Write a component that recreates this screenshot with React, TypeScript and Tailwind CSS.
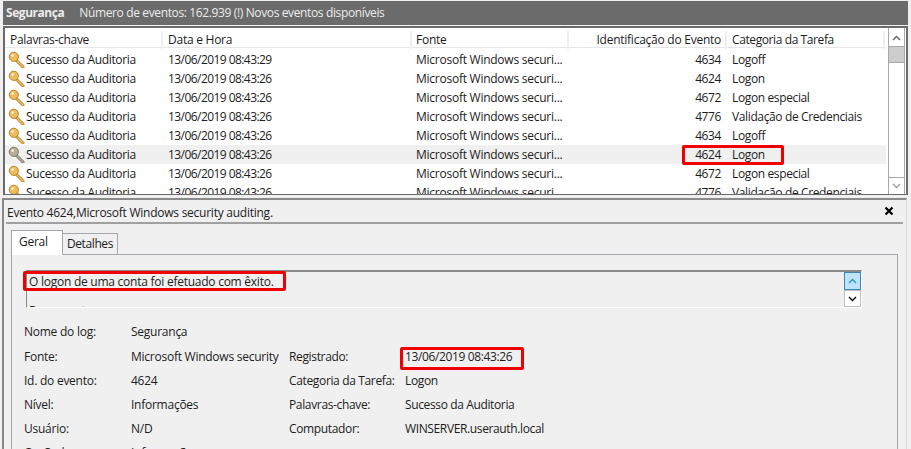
const font = { fontFamily: '"Open Sans", "Noto Sans", sans-serif' };

const rows = [
  ["13/06/2019 08:43:29", "4634", "Logoff"],
  ["13/06/2019 08:43:26", "4624", "Logon"],
  ["13/06/2019 08:43:26", "4672", "Logon especial"],
  ["13/06/2019 08:43:26", "4776", "Validação de Credenciais"],
  ["13/06/2019 08:43:26", "4634", "Logoff"],
  ["13/06/2019 08:43:26", "4624", "Logon"],
  ["13/06/2019 08:43:26", "4672", "Logon especial"],
  ["13/06/2019 08:43:26", "4776", "Validação de Credenciais"],
];

const cols = "grid grid-cols-[158px_249px_157px_158px_158px]";

function Key({ grey }: { grey?: boolean }) {
  const fill = grey ? "#b5b09a" : "#eebc5c";
  const line = grey ? "#7d7868" : "#b5832a";
  return (
    <svg width="17" height="17" viewBox="0 0 17 17" className="shrink-0">
      <path d="M7 8 L15 16" stroke={line} strokeWidth="3" strokeLinecap="round" />
      <path d="M7 8 L15 16" stroke={fill} strokeWidth="1.4" strokeLinecap="round" />
      <circle cx="5.8" cy="5.8" r="4.6" fill={fill} stroke={line} strokeWidth="1" />
      <circle cx="4.6" cy="4.6" r="1.3" fill="#fff5d8" />
    </svg>
  );
}

function Row({ r, sel }: { r: string[]; sel: boolean }) {
  return (
    <div className={`${cols} h-[19px] shrink-0 items-center leading-[19px] ${sel ? "bg-[#f0f0f0]" : ""}`}>
      <div className="flex items-center gap-[1px] pl-[3px]">
        <Key grey={sel} />
        <span className="whitespace-nowrap tracking-[-0.35px]">Sucesso da Auditoria</span>
      </div>
      <div className="whitespace-nowrap pl-[5px] tracking-[-0.56px]">{r[0]}</div>
      <div className="whitespace-nowrap pl-[4px]">Microsoft Windows securi...</div>
      <div className="pr-[6px] text-right tracking-[-0.4px]">{r[1]}</div>
      <div className="whitespace-nowrap pl-[5px] tracking-[-0.37px]">{r[2]}</div>
    </div>
  );
}

function Chevron({ up, color }: { up?: boolean; color: string }) {
  return (
    <svg width="9" height="6" viewBox="0 0 9 6">
      <path d={up ? "M1 5 L4.5 1.5 L8 5" : "M1 1 L4.5 4.5 L8 1"} fill="none" stroke={color} strokeWidth="1.4" />
    </svg>
  );
}

function Field({ label, value, label2, value2 }: { label: string; value: string; label2?: string; value2?: string }) {
  return (
    <div className="grid h-[24px] shrink-0 grid-cols-[107px_158px_116px_1fr] items-center whitespace-nowrap">
      <div>{label}</div>
      <div>{value}</div>
      <div className="tracking-[-0.35px]">{label2}</div>
      <div className="tracking-[-0.37px]">{value2}</div>
    </div>
  );
}

export default function App() {
  return (
    <div
      style={font}
      className="relative flex h-[449px] w-[911px] flex-col overflow-hidden bg-[#f0f0f0] pt-[1px] text-[12px] tracking-[-0.25px] text-[#1c1c1c]"
    >
      {/* Title bar */}
      <div className="mx-[3px] flex h-[24px] shrink-0 items-center bg-[#6b6b6b] pl-[3px] text-[#ececec]">
        <span className="font-bold tracking-[-0.45px]">Segurança</span>
        <span className="ml-[15px] tracking-[-0.37px]">Número de eventos: 162.939 (!) Novos eventos disponíveis</span>
      </div>

      {/* Event list */}
      <div className="mx-[3px] mt-[1px] flex h-[169px] shrink-0 overflow-hidden border-2 border-b-[1px] border-[#6b6b6b] bg-white">
        <div className="flex w-[881px] shrink-0 flex-col overflow-hidden pt-[1px]">
          <div className={`${cols} h-[19px] shrink-0 border-b border-[#e6e6e6] pt-[2px] leading-[18px]`}>
            <div className="border-r-2 border-[#efefef] pl-[5px] tracking-[-0.3px]">Palavras-chave</div>
            <div className="border-r-2 border-[#efefef] pl-[5px]">Data e Hora</div>
            <div className="border-r-2 border-[#efefef] pl-[4px]">Fonte</div>
            <div className="border-r-2 border-[#efefef] pr-[4px] text-right">Identificação do Evento</div>
            <div className="border-r-2 border-[#efefef] pl-[5px] tracking-[-0.4px]">Categoria da Tarefa</div>
          </div>
          <div className="flex flex-col pt-[2px]">
            {rows.map((r, i) => (
              <Row key={i} r={r} sel={i === 5} />
            ))}
          </div>
        </div>
        <div className="ml-[2px] flex w-[17px] shrink-0 flex-col border-x border-[#a8a8a8] pt-[1px]">
          <div className="flex h-[17px] items-center justify-center">
            <Chevron up color="#606060" />
          </div>
          <div className="h-[17px] border-y border-[#a8a8a8] bg-[#cdcdcd]" />
          <div className="flex-1" />
          <div className="flex h-[17px] items-center justify-center border-t border-[#a8a8a8]">
            <Chevron color="#a0a0a0" />
          </div>
        </div>
      </div>

      {/* Detail pane */}
      <div className="ml-[2px] mr-[4px] mt-[3px] flex flex-1 flex-col overflow-hidden border-l-2 border-r border-t-2 border-[#8a8a8a] border-r-[#dcdcdc] pl-[2px]">
        <div className="flex h-[22px] shrink-0 items-center justify-between pl-[1px] pr-[12px] pt-[4px]">
          <span>Evento 4624,Microsoft Windows security auditing.</span>
          <svg width="10" height="10" viewBox="0 0 10 10" className="-mt-[4px]">
            <path d="M1.5 1.5 L8.5 8.5 M8.5 1.5 L1.5 8.5" stroke="#000" strokeWidth="2.2" />
          </svg>
        </div>
        <div className="mr-[3px] h-[2px] shrink-0 bg-[#a0a0a0]" />

        {/* Tabs */}
        <div className="mt-[6px] flex h-[24px] shrink-0 items-end pl-[5px]">
          <div className="relative z-10 -mb-[1px] flex h-[25px] w-[52px] items-center border border-b-0 border-[#a6a6b0] bg-white pb-[2px] pl-[7px]">
            Geral
          </div>
          <div className="flex h-[21px] w-[55px] items-center justify-center border border-b-0 border-l-0 border-[#a6a6b0] bg-[#f0f0f0] tracking-[-0.4px]">
            Detalhes
          </div>
        </div>
        <div className="ml-[5px] mr-[8px] flex flex-1 flex-col border-l border-r border-t border-[#a6a6b0] pl-[12px]">
          {/* Message box */}
          <div className="ml-[2px] mr-[35px] mt-[15px] flex h-[38px] shrink-0 overflow-hidden border-b border-l border-r border-t-2 border-[#8a8a8a] border-b-white border-r-white">
            <div className="flex-1 overflow-hidden pl-[2px] pt-[2px] leading-[16px]">
              <div>O logon de uma conta foi efetuado com êxito.</div>
              <div className="mt-[13px]">Requerente:</div>
            </div>
            <div className="flex w-[17px] shrink-0 flex-col">
              <div className="flex h-[18px] items-center justify-center border border-[#3f86b8] bg-[#bfe3f7]">
                <Chevron up color="#1a9bc8" />
              </div>
              <div className="flex h-[17px] items-center justify-center border border-[#c0c0c0] bg-white">
                <Chevron color="#000" />
              </div>
            </div>
          </div>

          {/* Details grid */}
          <div className="mt-[12px] flex flex-col">
            <div className="mb-[1px]">
              <Field label="Nome do log:" value="Segurança" />
            </div>
            <Field label="Fonte:" value="Microsoft Windows security" label2="Registrado:" value2="13/06/2019 08:43:26" />
            <Field label="Id. do evento:" value="4624" label2="Categoria da Tarefa:" value2="Logon" />
            <Field label="Nível:" value="Informações" label2="Palavras-chave:" value2="Sucesso da Auditoria" />
            <Field label="Usuário:" value="N/D" label2="Computador:" value2="WINSERVER.userauth.local" />
            <Field label="Op Code:" value="Informações" />
          </div>
        </div>
      </div>

      {/* Red annotation boxes */}
      <div className="absolute left-[682px] top-[145px] h-[20px] w-[102px] rounded-[2px] border-[3px] border-[#f00000]" />
      <div className="absolute left-[23px] top-[271px] h-[20px] w-[263px] rounded-[2px] border-[3px] border-[#f00000]" />
      <div className="absolute left-[400px] top-[347px] h-[23px] w-[124px] rounded-[2px] border-[3px] border-[#f00000]" />
    </div>
  );
}
